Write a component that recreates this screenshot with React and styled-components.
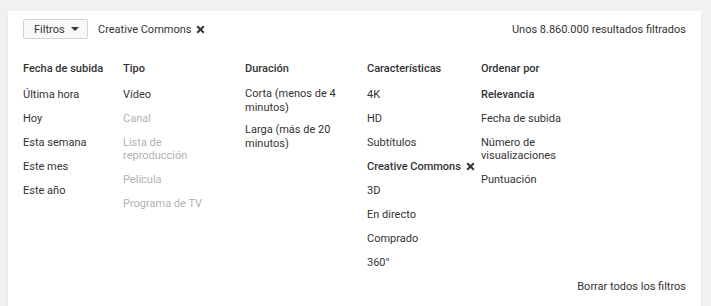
import React from "react";
import styled, { createGlobalStyle } from "styled-components";

const GlobalStyle = createGlobalStyle`
  body {
    margin: 0;
    background: #f1f1f1;
    font-family: Roboto, "Liberation Sans", Arial, sans-serif;
    color: #333;
  }
`;

const columns = [
  {
    title: "Fecha de subida",
    items: [
      { label: "Última hora" },
      { label: "Hoy" },
      { label: "Esta semana" },
      { label: "Este mes" },
      { label: "Este año" },
    ],
  },
  {
    title: "Tipo",
    items: [
      { label: "Vídeo" },
      { label: "Canal", disabled: true },
      { label: "Lista de reproducción", disabled: true },
      { label: "Película", disabled: true },
      { label: "Programa de TV", disabled: true },
    ],
  },
  {
    title: "Duración",
    tight: true,
    items: [
      { label: "Corta (menos de 4 minutos)" },
      { label: "Larga (más de 20 minutos)" },
    ],
  },
  {
    title: "Características",
    items: [
      { label: "4K" },
      { label: "HD" },
      { label: "Subtítulos" },
      { label: "Creative Commons", selected: true, removable: true },
      { label: "3D" },
      { label: "En directo" },
      { label: "Comprado" },
      { label: "360°" },
    ],
  },
  {
    title: "Ordenar por",
    items: [
      { label: "Relevancia", selected: true },
      { label: "Fecha de subida" },
      { label: "Número de visualizaciones" },
      { label: "Puntuación" },
    ],
  },
];

const CloseIcon = () => (
  <IconSvg width="9" height="9" viewBox="0 0 9 9">
    <path d="M1.2 1.2 L7.8 7.8 M7.8 1.2 L1.2 7.8" stroke="#333" strokeWidth="2" />
  </IconSvg>
);

const CaretIcon = () => (
  <IconSvg width="8" height="4" viewBox="0 0 8 4">
    <path d="M0 0 H8 L4 4 Z" fill="#333" />
  </IconSvg>
);

export default function App() {
  return (
    <Page>
      <GlobalStyle />
      <Card>
        <TopBar>
          <FilterButton>
            Filtros <CaretIcon />
          </FilterButton>
          <Chip>
            Creative Commons <CloseIcon />
          </Chip>
          <ResultCount>Unos 8.860.000 resultados filtrados</ResultCount>
        </TopBar>
        <Columns>
          {columns.map((col) => (
            <Column key={col.title}>
              <Heading>{col.title}</Heading>
              <List>
                {col.items.map((item) => (
                  <Item
                    key={item.label}
                    $tight={col.tight}
                    $disabled={item.disabled}
                    $selected={item.selected}
                  >
                    {item.label}
                    {item.removable && <CloseIcon />}
                  </Item>
                ))}
              </List>
            </Column>
          ))}
        </Columns>
        <Footer>Borrar todos los filtros</Footer>
      </Card>
    </Page>
  );
}

const Page = styled.div`
  padding: 11px 10px 0 8px;
  min-height: 306px;
  box-sizing: border-box;
`;

const Card = styled.div`
  background: #fff;
  box-shadow: 0 1px 2px rgba(0, 0, 0, 0.08);
  padding: 8px 15px 14px 15px;
  min-height: 295px;
  box-sizing: border-box;
  font-size: 11px;
`;

const IconSvg = styled.svg`
  flex-shrink: 0;
  display: block;
`;

const TopBar = styled.div`
  display: flex;
  align-items: center;
  height: 20px;
`;

const FilterButton = styled.button`
  display: flex;
  align-items: center;
  gap: 6px;
  height: 20px;
  width: 65px;
  padding: 0 0 0 10px;
  background: #f8f8f8;
  border: 1px solid #d3d3d3;
  border-radius: 2px;
  font-family: inherit;
  font-size: 11px;
  color: #333;
  box-sizing: border-box;
`;

const Chip = styled.div`
  display: flex;
  align-items: center;
  gap: 5px;
  margin-left: 10px;
`;

const ResultCount = styled.div`
  margin-left: auto;
`;

const Columns = styled.div`
  display: grid;
  grid-template-columns: 100px 122px 122px 114px 1fr;
  margin-top: 23px;
`;

const Column = styled.div`
  max-width: 104px;
`;

const Heading = styled.div`
  font-weight: 500;
  line-height: 13px;
  margin-bottom: 8px;
`;

const List = styled.ul`
  list-style: none;
  margin: 0;
  padding: 0;
`;

const Item = styled.li`
  display: flex;
  align-items: center;
  gap: 5px;
  white-space: ${(p) => (p.$selected ? "nowrap" : "normal")};
  line-height: ${(p) => (p.$tight ? "14px" : "13px")};
  padding: ${(p) => (p.$tight ? "4px 0" : "5px 0 6px")};
  font-weight: ${(p) => (p.$selected ? 500 : 400)};
  color: ${(p) => (p.$disabled ? "#b1b1b1" : "#333")};
`;

const Footer = styled.div`
  text-align: right;
  margin-top: 5px;
  line-height: 13px;
`;
